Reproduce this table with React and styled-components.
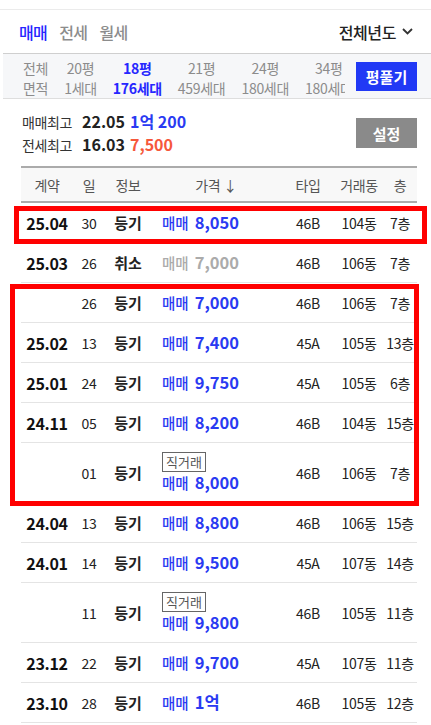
import React from "react";
import styled, { createGlobalStyle } from "styled-components";

const GlobalStyle = createGlobalStyle`
  html, body { margin: 0; padding: 0; background: #fff; }
  body {
    font-family: "Noto Sans CJK KR", "Noto Sans", sans-serif;
    color: #222;
  }
  * { box-sizing: border-box; }
`;

const COLS = "52px 32px 46px 130px 54px 48px 34px";
const BLUE = "#2a3af2";

const Page = styled.div`
  width: 431px;
  padding-top: 9px;
  overflow: hidden;
`;

const TopRule = styled.div`
  height: 1px;
  background: #ebebeb;
`;

const TabBar = styled.div`
  height: 43px;
  display: flex;
  align-items: center;
  justify-content: space-between;
  padding: 0 18px 0 19px;
`;

const Tabs = styled.div`
  display: flex;
  gap: 12px;
`;

const Tab = styled.span`
  font-size: 16px;
  font-weight: 500;
  letter-spacing: -0.6px;
  color: ${(p) => (p.$active ? "#2626ff" : "#8c8c8c")};
`;

const YearSelect = styled.div`
  display: flex;
  align-items: center;
  gap: 6px;
  font-size: 16px;
  font-weight: 500;
  color: #222;
  letter-spacing: -0.4px;
`;

const AreaBar = styled.div`
  margin-left: 3px;
  height: 46px;
  border-top: 1px solid #cfcfcf;
  border-bottom: 1px solid #dedede;
  background: #f6f7f9;
  display: flex;
  align-items: center;
  padding: 0 14px 0 20px;
`;

const AreaScroll = styled.div`
  flex: 1;
  align-self: stretch;
  overflow: hidden;
  display: flex;
  align-items: center;
  gap: 16px;
  padding-top: 4px;
  white-space: nowrap;
`;

const AreaItem = styled.div`
  flex-shrink: 0;
  display: flex;
  flex-direction: column;
  align-items: center;
  font-size: 14px;
  line-height: 20px;
  letter-spacing: -0.3px;
  color: ${(p) => (p.$active ? "#2626ff" : "#8c8c8c")};
  font-weight: ${(p) => (p.$active ? 700 : 400)};
`;

const SplitButton = styled.button`
  flex-shrink: 0;
  width: 61px;
  height: 29px;
  margin-left: 11px;
  border: 0;
  padding: 0;
  background: #2139f5;
  color: #fff;
  font-family: inherit;
  font-size: 15px;
  font-weight: 700;
`;

const Summary = styled.div`
  display: flex;
  align-items: center;
  justify-content: space-between;
  padding: 11px 14px 10px 22px;
`;

const SummaryLines = styled.div`
  display: flex;
  flex-direction: column;
`;

const SummaryLine = styled.div`
  display: flex;
  align-items: baseline;
  height: 23px;
  line-height: 23px;
`;

const SummaryLabel = styled.span`
  width: 60px;
  font-size: 14px;
  color: #333;
  letter-spacing: -0.4px;
`;

const SummaryDate = styled.span`
  width: 48px;
  font-size: 16px;
  font-weight: 700;
  color: #222;
`;

const SummaryPrice = styled.span`
  font-size: 16px;
  font-weight: 700;
  color: ${(p) => (p.$tone === "jeonse" ? "#f6583b" : BLUE)};
`;

const SettingsButton = styled.button`
  width: 61px;
  height: 30px;
  border: 0;
  padding: 0;
  background: #8a8a8a;
  color: #fff;
  font-family: inherit;
  font-size: 15px;
  font-weight: 700;
`;

const Table = styled.div`
  margin: 0 14px 0 21px;
`;

const HeaderRow = styled.div`
  display: grid;
  grid-template-columns: ${COLS};
  align-items: center;
  height: 37px;
  border-top: 2px solid #ababab;
  border-bottom: 2px solid #ababab;
  background: #f8f8f8;
  font-size: 14px;
  color: #555;
  letter-spacing: -0.3px;
`;

const HeadCell = styled.div`
  text-align: center;
`;

const Row = styled.div`
  display: grid;
  grid-template-columns: ${COLS};
  align-items: center;
  height: ${(p) => (p.$tall ? 60 : 40)}px;
  border-bottom: 1px solid #e4e4e4;
  color: #222;
`;

const Highlight = styled.div`
  position: relative;
  &::after {
    content: "";
    position: absolute;
    top: ${(p) => p.$top}px;
    bottom: ${(p) => p.$bottom}px;
    left: ${(p) => p.$left}px;
    right: ${(p) => p.$right}px;
    border: 5px solid #ff0000;
    pointer-events: none;
  }
`;

const DateCell = styled.div`
  text-align: center;
  font-size: 16px;
  font-weight: 700;
  letter-spacing: -0.3px;
  color: #111;
`;

const PlainCell = styled.div`
  text-align: center;
  font-size: 14px;
  color: #222;
  letter-spacing: -0.3px;
`;

const InfoCell = styled.div`
  text-align: center;
  font-size: 15px;
  font-weight: 700;
  color: #222;
`;

const PriceCell = styled.div`
  display: flex;
  flex-direction: column;
  align-items: flex-start;
  padding-left: 11px;
`;

const DirectTag = styled.span`
  display: inline-block;
  height: 20px;
  line-height: 18px;
  padding: 0 3px;
  border: 1px solid #666;
  font-size: 13px;
  color: #555;
`;

const PriceLine = styled.div`
  display: flex;
  align-items: baseline;
  gap: 6px;
  line-height: 21px;
  color: ${(p) => (p.$muted ? "#ababab" : BLUE)};
`;

const DealKind = styled.span`
  font-size: 14.5px;
  font-weight: 500;
`;

const Amount = styled.span`
  font-size: 16.5px;
  font-weight: 700;
`;

const Chevron = () => (
  <svg width="11" height="7" viewBox="0 0 11 7" fill="none">
    <path d="M1 1l4.5 4.5L10 1" stroke="#333" strokeWidth="1.8" />
  </svg>
);

const areas = [
  { top: "전체", bottom: "면적" },
  { top: "20평", bottom: "1세대" },
  { top: "18평", bottom: "176세대", active: true },
  { top: "21평", bottom: "459세대" },
  { top: "24평", bottom: "180세대" },
  { top: "34평", bottom: "180세대" },
];

const rows = [
  { date: "25.04", day: "30", info: "등기", price: "8,050", type: "46B", dong: "104동", floor: "7층" },
  { date: "25.03", day: "26", info: "취소", price: "7,000", type: "46B", dong: "106동", floor: "7층", cancelled: true },
  { date: "", day: "26", info: "등기", price: "7,000", type: "46B", dong: "106동", floor: "7층" },
  { date: "25.02", day: "13", info: "등기", price: "7,400", type: "45A", dong: "105동", floor: "13층" },
  { date: "25.01", day: "24", info: "등기", price: "9,750", type: "45A", dong: "105동", floor: "6층" },
  { date: "24.11", day: "05", info: "등기", price: "8,200", type: "46B", dong: "104동", floor: "15층" },
  { date: "", day: "01", info: "등기", price: "8,000", type: "46B", dong: "106동", floor: "7층", direct: true },
  { date: "24.04", day: "13", info: "등기", price: "8,800", type: "46B", dong: "106동", floor: "15층" },
  { date: "24.01", day: "14", info: "등기", price: "9,500", type: "45A", dong: "107동", floor: "14층" },
  { date: "", day: "11", info: "등기", price: "9,800", type: "46B", dong: "105동", floor: "11층", direct: true },
  { date: "23.12", day: "22", info: "등기", price: "9,700", type: "45A", dong: "107동", floor: "11층" },
  { date: "23.10", day: "28", info: "등기", price: "1억", type: "46B", dong: "105동", floor: "12층" },
];

const DealRow = ({ r }) => (
  <Row $tall={r.direct}>
    <DateCell>{r.date}</DateCell>
    <PlainCell>{r.day}</PlainCell>
    <InfoCell>{r.info}</InfoCell>
    <PriceCell>
      {r.direct && <DirectTag>직거래</DirectTag>}
      <PriceLine $muted={r.cancelled}>
        <DealKind>매매</DealKind>
        <Amount>{r.price}</Amount>
      </PriceLine>
    </PriceCell>
    <PlainCell>{r.type}</PlainCell>
    <PlainCell>{r.dong}</PlainCell>
    <PlainCell>{r.floor}</PlainCell>
  </Row>
);

export default function App() {
  return (
    <Page>
      <GlobalStyle />
      <TopRule />
      <TabBar>
        <Tabs>
          <Tab $active>매매</Tab>
          <Tab>전세</Tab>
          <Tab>월세</Tab>
        </Tabs>
        <YearSelect>
          전체년도 <Chevron />
        </YearSelect>
      </TabBar>
      <AreaBar>
        <AreaScroll>
          {areas.map((a) => (
            <AreaItem key={a.top} $active={a.active}>
              <span>{a.top}</span>
              <span>{a.bottom}</span>
            </AreaItem>
          ))}
        </AreaScroll>
        <SplitButton>평풀기</SplitButton>
      </AreaBar>
      <Summary>
        <SummaryLines>
          <SummaryLine>
            <SummaryLabel>매매최고</SummaryLabel>
            <SummaryDate>22.05</SummaryDate>
            <SummaryPrice>1억 200</SummaryPrice>
          </SummaryLine>
          <SummaryLine>
            <SummaryLabel>전세최고</SummaryLabel>
            <SummaryDate>16.03</SummaryDate>
            <SummaryPrice $tone="jeonse">7,500</SummaryPrice>
          </SummaryLine>
        </SummaryLines>
        <SettingsButton>설정</SettingsButton>
      </Summary>
      <Table>
        <HeaderRow>
          <HeadCell>계약</HeadCell>
          <HeadCell>일</HeadCell>
          <HeadCell>정보</HeadCell>
          <HeadCell>가격 ↓</HeadCell>
          <HeadCell>타입</HeadCell>
          <HeadCell>거래동</HeadCell>
          <HeadCell>층</HeadCell>
        </HeaderRow>
        <Highlight $top={3} $bottom={-1} $left={-7} $right={-10}>
          <DealRow r={rows[0]} />
        </Highlight>
        <DealRow r={rows[1]} />
        <Highlight $top={1} $bottom={-3} $left={-11} $right={-2}>
          {rows.slice(2, 7).map((r, i) => (
            <DealRow key={i} r={r} />
          ))}
        </Highlight>
        {rows.slice(7).map((r, i) => (
          <DealRow key={i} r={r} />
        ))}
      </Table>
    </Page>
  );
}
